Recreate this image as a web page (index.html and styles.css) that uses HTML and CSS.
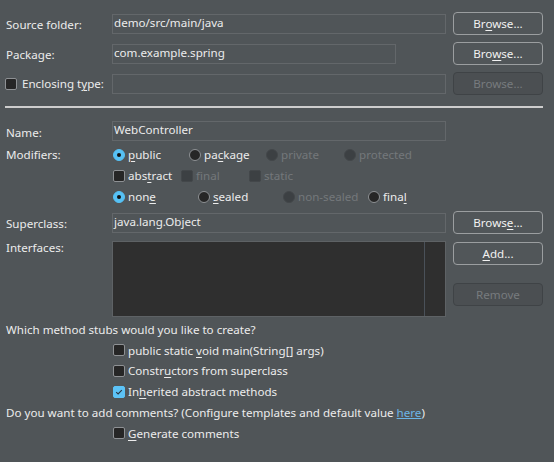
FILE: index.html
```html
<!DOCTYPE html>
<html>
<head>
<meta charset="utf-8">
<link rel="stylesheet" href="styles.css">
</head>
<body>
<div class="dialog">
  <div class="row top">
    <span class="lbl">Source folder:</span>
    <div class="cell"><div class="field">demo/src/main/java</div></div>
    <button class="btn">Br<u>o</u>wse...</button>
  </div>
  <div class="row top gap7">
    <span class="lbl">Package:</span>
    <div class="cell"><div class="field short">com.example.spring</div></div>
    <button class="btn">Bro<u>w</u>se...</button>
  </div>
  <div class="row top gap7">
    <span class="lbl enc"><span class="cb"></span><span>Enclosing t<u>y</u>pe:</span></span>
    <div class="cell"><div class="field"></div></div>
    <button class="btn disabled">Browse...</button>
  </div>
  <div class="sep"></div>
  <div class="row name-row">
    <span class="lbl">Name:</span>
    <div class="cell"><div class="field">WebController</div></div>
  </div>
  <div class="row mods">
    <span class="lbl optlbl">Modifiers:</span>
    <div class="opts">
      <div class="optrow">
        <span class="opt w76"><span class="rb on"></span><span><u>p</u>ublic</span></span>
        <span class="opt w77"><span class="rb"></span><span>pa<u>c</u>kage</span></span>
        <span class="opt w78 dis"><span class="rb"></span><span>private</span></span>
        <span class="opt dis"><span class="rb"></span><span>protected</span></span>
      </div>
      <div class="optrow">
        <span class="opt w68"><span class="cb"></span><span>abs<u>t</u>ract</span></span>
        <span class="opt w68 dis"><span class="cb"></span><span>final</span></span>
        <span class="opt dis"><span class="cb"></span><span>static</span></span>
      </div>
      <div class="optrow">
        <span class="opt w85"><span class="rb on"></span><span>non<u>e</u></span></span>
        <span class="opt w85"><span class="rb"></span><span><u>s</u>ealed</span></span>
        <span class="opt w85 dis"><span class="rb"></span><span>non-sealed</span></span>
        <span class="opt"><span class="rb"></span><span>fina<u>l</u></span></span>
      </div>
    </div>
  </div>
  <div class="row top super">
    <span class="lbl">Superclass:</span>
    <div class="cell"><div class="field">java.lang.Object</div></div>
    <button class="btn">Brows<u>e</u>...</button>
  </div>
  <div class="row ifaces">
    <span class="lbl optlbl">Interfaces:</span>
    <div class="list"><div class="list-main"></div><div class="list-bar"></div></div>
    <div class="btncol">
      <button class="btn"><u>A</u>dd...</button>
      <button class="btn disabled remove">Remove</button>
    </div>
  </div>
  <div class="line first"><span>Which method stubs would you like to create?</span></div>
  <div class="line indent"><span class="cb"></span><span>public static <u>v</u>oid main(String[] args)</span></div>
  <div class="line indent"><span class="cb"></span><span>Constr<u>u</u>ctors from superclass</span></div>
  <div class="line indent"><span class="cb checked"><svg viewBox="0 0 12 12" width="12" height="12"><path d="M3.2 6.2 L5.1 8 L8.8 4.2" fill="none" stroke="#2a3540" stroke-width="1.1"/></svg></span><span>In<u>h</u>erited abstract methods</span></div>
  <div class="line"><span>Do you want to add comments? (Configure templates and default value <a class="link">here</a>)</span></div>
  <div class="line indent"><span class="cb"></span><span><u>G</u>enerate comments</span></div>
</div>
</body>
</html>
```

FILE: styles.css
```css
html, body {
  margin: 0;
  padding: 0;
  background: #505558;
}
body {
  width: 554px;
  height: 462px;
  overflow: hidden;
  font-family: "Noto Sans", "Open Sans", sans-serif;
  font-size: 11.6px;
  color: #ececec;
}
.dialog {
  padding: 12px 11px 0 5px;
}
.row {
  display: flex;
  align-items: center;
}
.row.top {
  height: 23px;
}
.gap7 {
  margin-top: 7px;
}
.lbl {
  width: 107px;
  flex: none;
  padding-left: 1px;
  box-sizing: border-box;
  white-space: nowrap;
  position: relative;
  top: 1px;
}
.enc {
  display: flex;
  align-items: center;
  padding-left: 0;
  top: 0;
}
.enc .cb {
  margin-right: 5px;
}
.cell {
  width: 334px;
  flex: none;
}
.field {
  width: 334px;
  height: 20px;
  box-sizing: border-box;
  border: 1px solid #63676a;
  padding: 0 0 0 1px;
  line-height: 16px;
  white-space: nowrap;
  overflow: hidden;
}
.field.short {
  width: 284px;
}
.btn {
  width: 90px;
  height: 23px;
  flex: none;
  margin-left: 7px;
  box-sizing: border-box;
  border: 1px solid #9b9ea0;
  border-radius: 4px;
  background: #515659;
  color: #f2f2f2;
  font-family: inherit;
  font-size: 11.6px;
  padding: 0;
  line-height: 20px;
}
.btn.disabled {
  border-color: #3f4346;
  background: #4b4f52;
  color: #777b7e;
}
.sep {
  height: 2px;
  background: #cdcdcd;
  margin-top: 11px;
  width: 538px;
}
.name-row {
  margin-top: 13px;
}
.mods {
  align-items: flex-start;
  margin-top: 3px;
}
.optlbl {
  line-height: 21px;
  top: 0;
}
.opts {
  display: flex;
  flex-direction: column;
  padding-left: 1px;
}
.optrow {
  display: flex;
  height: 21px;
  align-items: center;
}
.opt {
  display: flex;
  align-items: center;
  white-space: nowrap;
}
.w68 { width: 68px; }
.w76 { width: 76px; }
.w77 { width: 77px; }
.w78 { width: 78px; }
.w85 { width: 85px; }
.dis {
  color: #74787b;
}
.rb {
  width: 12px;
  height: 12px;
  box-sizing: border-box;
  border-radius: 50%;
  background: #262626;
  border: 1px solid #8e9194;
  margin-right: 3px;
  flex: none;
  position: relative;
}
.rb.on {
  background: #56c1f5;
  border-color: #56c1f5;
}
.rb.on::after {
  content: "";
  position: absolute;
  left: 3px;
  top: 3px;
  width: 4px;
  height: 4px;
  border-radius: 50%;
  background: #111;
}
.dis .rb, .dis .cb {
  background: #3c4043;
  border-color: #43474a;
}
.cb {
  width: 12px;
  height: 12px;
  box-sizing: border-box;
  border-radius: 2px;
  background: #262626;
  border: 1px solid #8e9194;
  margin-right: 3px;
  flex: none;
  display: inline-block;
}
.cb.checked {
  background: #5cc3f7;
  border-color: #5cc3f7;
  position: relative;
}
.cb.checked svg {
  position: absolute;
  left: -1px;
  top: -1px;
}
.super {
  margin-top: 4px;
}
.ifaces {
  align-items: flex-start;
  margin-top: 7px;
}
.ifaces .optlbl {
  line-height: 14px;
}
.list {
  width: 334px;
  height: 76px;
  flex: none;
  box-sizing: border-box;
  border: 1px solid #5e6265;
  background: #2f2f2f;
  display: flex;
}
.list-main {
  flex: 1;
}
.list-bar {
  width: 20px;
  border-left: 1px solid #4a5159;
}
.btncol {
  display: flex;
  flex-direction: column;
  padding-top: 1px;
}
.btncol .remove {
  margin-top: 18px;
}
.line {
  display: flex;
  align-items: center;
  height: 20.8px;
  white-space: nowrap;
  padding-left: 1px;
}
.line.first {
  margin-top: 2px;
}
.indent {
  padding-left: 108px;
}
.link {
  color: #6cb4e6;
  text-decoration: underline;
}
u {
  text-decoration: underline;
  text-underline-offset: 2px;
}
```
